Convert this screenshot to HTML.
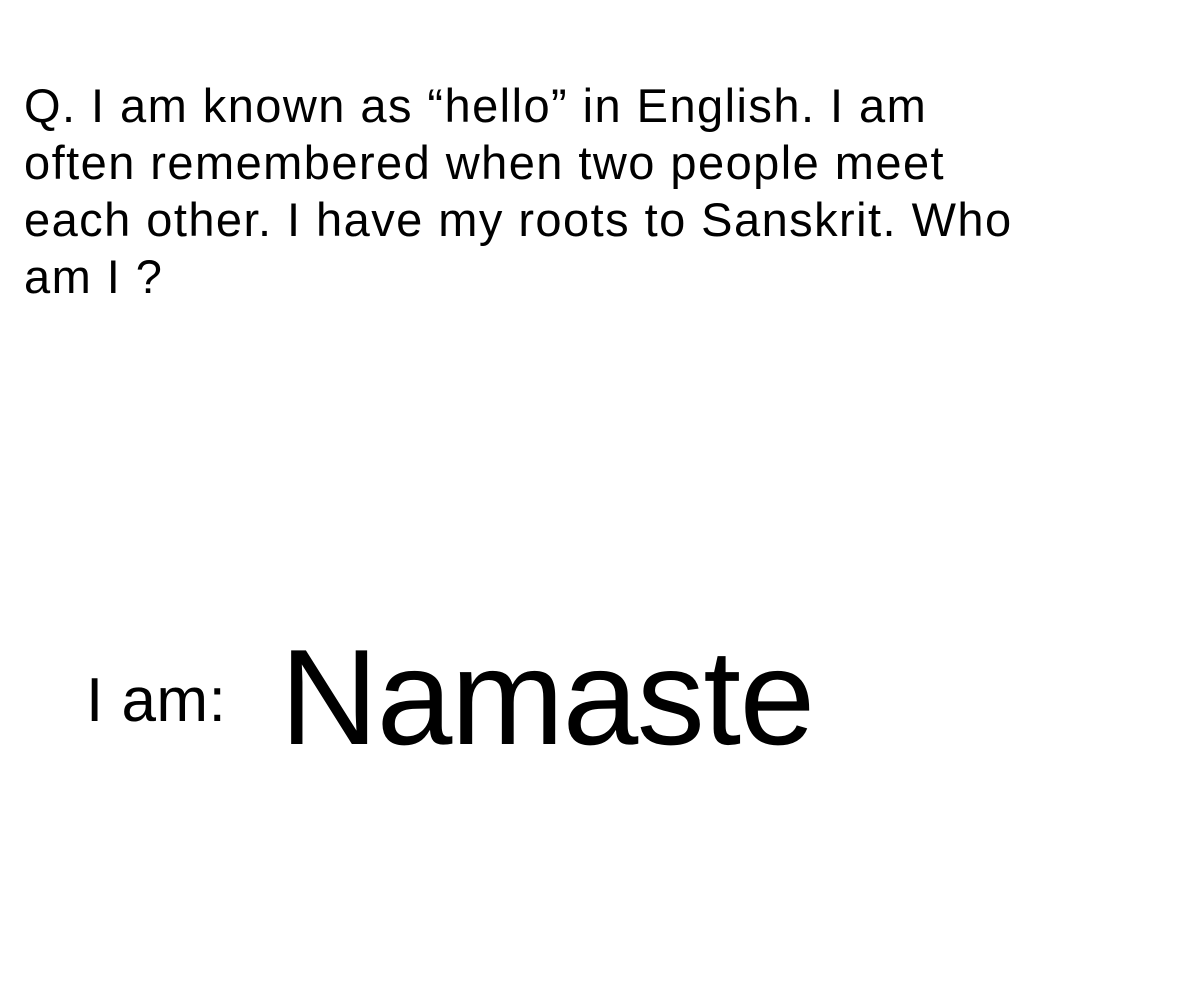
<!DOCTYPE html>
<html><head><meta charset="utf-8"><style>
html,body{margin:0;padding:0;background:#fff;width:1200px;height:1000px;overflow:hidden}
body{position:relative;font-family:"Liberation Sans",sans-serif;color:#000}
.q{position:absolute;left:24px;top:77px;width:1100px;font-size:47px;line-height:57px;letter-spacing:1.45px}
.iam{position:absolute;left:86px;top:666px;font-size:62px;line-height:70px;letter-spacing:0.5px}
.ans{position:absolute;left:280px;top:624px;font-size:136px;line-height:146px;letter-spacing:-1.5px}
</style></head><body>
<div class="q">Q. I am known as “hello” in English. I am<br>often remembered when two people meet<br>each other. I have my roots to Sanskrit. Who<br>am I ?</div>
<div class="iam">I am:</div>
<div class="ans">Namaste</div>
</body></html>
